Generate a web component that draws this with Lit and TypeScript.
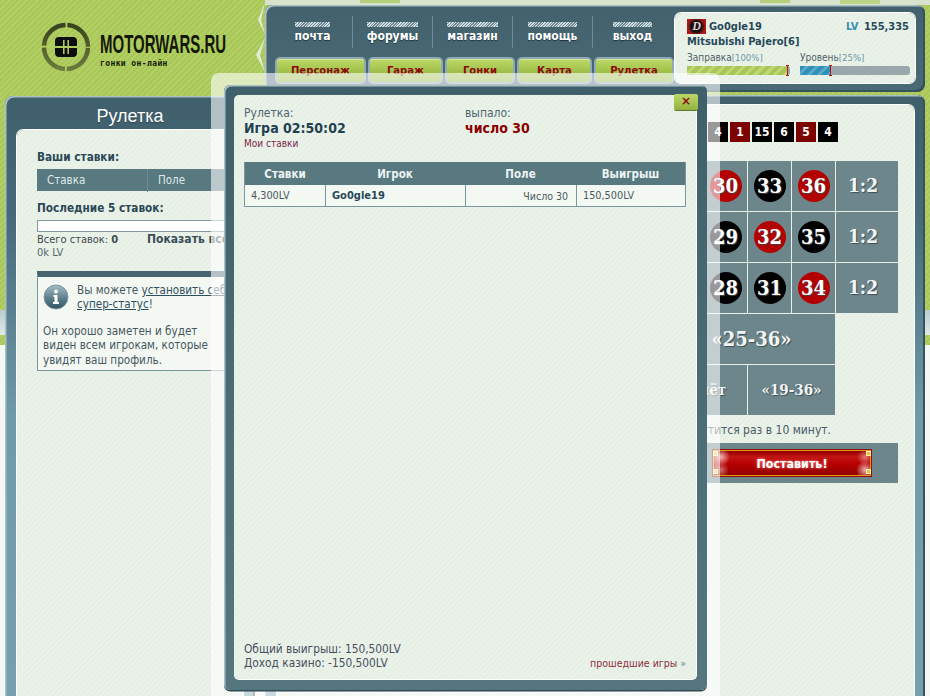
import { LitElement, html, css, svg } from "lit";
import { customElement } from "lit/decorators.js";

const RED = new Set([30, 32, 34, 36]);
const NAV = ["почта", "форумы", "магазин", "помощь", "выход"];
const TABS = ["Персонаж", "Гараж", "Гонки", "Карта", "Рулетка"];
const LAST = [
  [4, "b"], [1, "r"], [15, "b"], [6, "b"], [5, "r"], [4, "b"],
] as const;
/* Only the three columns the dialog leaves visible carry numbers. */
const ROWS = [3, 2, 1].map((base) => Array.from({ length: 12 }, (_, i) => (i >= 9 ? base + i * 3 : 0)));

@customElement("app-root")
export class AppRoot extends LitElement {
  static styles = css`
    :host {
      display: block;
      position: relative;
      width: 930px;
      height: 696px;
      overflow: hidden;
      font-family: "DejaVu Sans", sans-serif;
      font-stretch: condensed;
      font-size: 12px;
      color: #45575f;
      background:
        linear-gradient(#0000 0 310px, #b9cdd2 310px, #dfe8e6 335px, #0000 335px),
        linear-gradient(#0000 0 345px, #f3f8f2 345px),
        repeating-linear-gradient(135deg, #a8c758 0 2px, #b1cf63 2px 4px);
    }
    .deco { position: absolute; left: 250px; top: 0; }
    .page {
      position: relative;
      display: grid;
      grid-template-columns: 250px 660px;
      grid-template-rows: 87px 620px;
      column-gap: 10px;
      row-gap: 3px;
      padding: 5px 0 0 5px;
    }
    .logo { display: flex; align-items: center; gap: 9px; padding: 0 0 4px 36px; }
    .logo-text { display: flex; flex-direction: column; color: #14180a; margin-top: 5px; }
    .brand {
      font: 700 25px/29px "Liberation Sans", sans-serif;
      transform: scaleX(0.6);
      transform-origin: left;
      white-space: nowrap;
      width: 126px;
    }
    .slogan { font: 700 8px/10px "DejaVu Sans Mono", monospace; letter-spacing: 0.4px; }

    .frame {
      background: linear-gradient(#3f5f6b 0, #47697a 120px, #6f9aa8 320px, #76a0ad 100%);
      box-shadow: inset 1.5px 1.5px 0 #a9bfc6, inset -2px 0 0 #365361;
      border-radius: 8px 8px 0 0;
    }
    .head {
      display: flex;
      background: linear-gradient(#42616d, #4a6a76);
      box-shadow: inset 1.5px 1.5px 0 #a9bfc6, inset -2px -2px 0 #35525e;
      border-radius: 8px;
      padding: 8px 10px 9px 0;
    }
    .nav { flex: 1; padding-left: 8px; }
    .nav-items { display: flex; margin-top: 3px; height: 32px; }
    .nav-item {
      width: 79px;
      display: flex;
      justify-content: center;
      align-items: center;
      border-right: 1px solid #6f8d98;
    }
    .nav-item:last-child { border-right: 0; }
    .nav-label {
      display: flex;
      flex-direction: column;
      gap: 2px;
      color: #fff;
      font-weight: 700;
      font-size: 12px;
      line-height: 14px;
      text-shadow: 0 1px 1px #1f3540;
    }
    .hatch {
      height: 5px;
      background: repeating-linear-gradient(135deg, #cfdbdf 0 1px, #6f8b96 1px 2px);
    }
    .tabs {
      display: grid;
      grid-template-columns: 87px 71px 66px 71px 76px;
      gap: 6px;
      margin: 11px 0 0 4px;
    }
    .tab {
      height: 23px;
      border-radius: 3px;
      background: linear-gradient(#bcd968, #a1c04a 55%, #92b23e);
      box-shadow: 0 0 0 2px #8faab6, inset 0 1px 0 #d7ea97;
      color: #8b0c0c;
      font-weight: 700;
      font-size: 11.2px;
      display: flex;
      align-items: center;
      justify-content: center;
      box-sizing: border-box;
    }
    .user {
      width: 240px;
      box-sizing: border-box;
      padding: 5px 6px 0 12px;
      border-radius: 6px;
      box-shadow: 0 0 0 1px #fff;
      background: repeating-linear-gradient(135deg, #e6efe5 0 2px, #ebf3e9 2px 4px);
    }
    .u-top { display: flex; align-items: center; height: 16px; color: #27495a; font-weight: 700; font-size: 11px; }
    .avatar {
      width: 19px; height: 15px; margin-right: 3px;
      background: radial-gradient(circle, #111 45%, #b01818 72%);
      display: flex; align-items: center; justify-content: center;
      color: #e9c9c9; font: italic 700 12px/15px "Liberation Serif", serif;
    }
    .lv { margin-left: auto; }
    .lv b { color: #3a8fb3; margin-right: 2px; }
    .car { color: #27495a; font-weight: 700; font-size: 11px; line-height: 16px; }
    .bars { display: grid; grid-template-columns: 103px 110px; gap: 10px; margin-top: 1px; }
    .bar-label { font-size: 10px; line-height: 13px; color: #4d6169; white-space: nowrap; }
    .bar-label span { color: #6d97a8; font-size: 9.5px; }
    .bar { position: relative; height: 9px; margin-top: 2px; background: #9aa8ad; border-radius: 0 3px 3px 0; }
    .fill { position: relative; height: 100%; }
    .fill.green { background: repeating-linear-gradient(135deg, #a7c653 0 4px, #bdd676 4px 7px); }
    .fill.blue { background: repeating-linear-gradient(135deg, #2f90b8 0 4px, #5aa9c6 4px 7px); }
    .fill::after {
      content: "";
      position: absolute;
      right: 0;
      top: -1px;
      bottom: -1px;
      width: 1px;
      background: #b01818;
    }
    .fill::before {
      content: "";
      position: absolute;
      right: -1px;
      top: -1px;
      bottom: -1px;
      width: 3px;
      border-top: 1px solid #b01818;
      border-bottom: 1px solid #b01818;
      box-sizing: border-box;
    }

    .main-l { margin-top: 1px; padding: 0 12px; display: flex; flex-direction: column; }
    .main-l-title {
      height: 34px;
      box-sizing: border-box;
      padding-top: 5px;
      display: flex;
      align-items: center;
      justify-content: center;
      color: #fff;
      font: 400 18px/1 "Liberation Sans", sans-serif;
      text-shadow: 0 1px 1px #2b4450;
      flex: none;
    }
    .inner {
      border-radius: 6px 6px 0 0;
      box-shadow: 0 0 0 1px #fff;
      background: repeating-linear-gradient(135deg, #e6efe5 0 2px, #ebf3e9 2px 4px);
    }
    .left-inner { flex: 1; padding: 20px 8px 0 20px; }
    h4 { margin: 0; font-size: 11.7px; line-height: 15px; color: #2a4856; font-weight: 700; }
    .thead {
      display: grid;
      grid-template-columns: 110px 1fr;
      height: 22px;
      margin-top: 4px;
      background: #58797f;
      color: #dfe9ea;
      font-size: 11.5px;
      line-height: 23px;
    }
    .thead span { padding-left: 10px; }
    .thead span + span { border-left: 1px solid #6d8c92; }
    .last { margin-top: 10px; }
    .empty { height: 10px; margin-top: 4px; background: #fff; border: 1px solid #82989f; }
    .totals { display: grid; grid-template-columns: 110px 1fr; margin-top: 0; line-height: 13px; font-size: 11px; padding-top: 1px; }
    .totals strong { font-size: 12px; color: #3c4d59; white-space: nowrap; }
    .totals .k { color: #3c4a50; }
    .sub { font-size: 11px; color: #55656b; line-height: 13px; }
    .info {
      margin-top: 12px;
      background: #f4f8f3;
      border: 1px solid #7c969e;
      border-top: 6px solid #466570;
      padding: 6px 5px 3px 5px;
      line-height: 14.3px;
      font-size: 11.6px;
      color: #45575f;
    }
    .info-top { display: flex; gap: 8px; align-items: flex-start; margin-bottom: 12px; min-height: 29px; }
    .info-top svg { flex: none; margin-top: 1px; }
    .info a { color: #2f5060; text-decoration: underline; }
    .nw { white-space: nowrap; }

    .main-r { padding: 10px 11px 0 12px; }
    .right-inner { height: 100%; padding: 17px 16px 0 0; box-sizing: border-box; }
    .hist { display: flex; justify-content: flex-end; gap: 2px; margin-right: 60px; }
    .sq {
      width: 20px; height: 20px;
      display: flex; align-items: center; justify-content: center;
      color: #fff;
      font-weight: 700;
      font-size: 12px;
      background: #000;
    }
    .sq.r { background: #7d0202; }
    .table {
      display: grid;
      grid-template-columns: repeat(12, 43px) 62px;
      grid-auto-rows: 50px;
      gap: 1px;
      justify-content: end;
      margin-top: 19px;
    }
    .cell {
      background: #6d868c;
      display: flex;
      align-items: center;
      justify-content: center;
      color: #f2f5f5;
      font: 700 20px/1 "DejaVu Serif", serif;
      font-stretch: condensed;
      text-shadow: 1px 1px 1px #3d4f55;
      white-space: nowrap;
      overflow: hidden;
    }
    .cell.small { font-size: 15px; }
    .cell.ratio { font-size: 19px; padding: 0 8px 2px 0; }
    .span4 { grid-column: span 4; padding-left: 8px; }
    .span2 { grid-column: span 2; }
    .num {
      width: 32px; height: 32px;
      border-radius: 50%;
      background: #000;
      display: flex; align-items: center; justify-content: center;
      color: #fff;
      text-shadow: 1px 1px 1px #444;
    }
    .num.r { background: #b30000; }
    .note { margin: 8px 67px 0 0; text-align: right; line-height: 14px; white-space: nowrap; color: #4a5a66; }
    .bet {
      margin-top: 6px;
      height: 40px;
      margin-left: -20px;
      background: #6d868c;
      display: flex;
      align-items: center;
      justify-content: flex-end;
      padding-right: 27px;
    }
    .btn {
      position: relative;
      width: 158px; height: 26px;
      box-sizing: border-box;
      border: 1px solid #e79a12;
      outline: 1px solid #8a0f0f;
      background:
        radial-gradient(circle at 7px 6px, #ffd9d9cc 0, #0000 9px),
        radial-gradient(circle at 151px 19px, #ffd9d9cc 0, #0000 9px),
        radial-gradient(circle at 151px 6px, #ffd9d980 0, #0000 8px),
        radial-gradient(circle at 7px 19px, #ffd9d980 0, #0000 8px),
        linear-gradient(#8f0000, #c41414 25%, #b50000 55%, #920000);
      color: #fff;
      display: flex; align-items: center; justify-content: center;
      font-weight: 700;
      font-size: 12.4px;
      text-shadow: 0 0 3px #ffb0b0;
    }
    .btn i {
      position: absolute;
      width: 5px; height: 5px;
      background: #e8c34a;
      border: 1px solid #fff0a8;
      box-sizing: border-box;
    }
    .btn i:nth-child(1) { left: -1px; top: 0; }
    .btn i:nth-child(2) { right: -1px; top: 0; }
    .btn i:nth-child(3) { left: -1px; bottom: 1px; }
    .btn i:nth-child(4) { right: -1px; bottom: 1px; }

    .overlay {
      position: absolute;
      left: 211px;
      top: 73px;
      width: 509px;
      height: 623px;
      box-sizing: border-box;
      padding: 12px 13px 6px 13px;
      background: rgba(255, 255, 255, 0.6);
      border-radius: 8px 8px 0 0;
      display: flex;
    }
    .modal {
      position: relative;
      flex: 1;
      display: flex;
      padding: 10px;
      background: linear-gradient(#3f5f6b, #56767f);
      border-radius: 6px;
      box-shadow: inset 1.5px 1.5px 0 #a9bfc6, 0 1.5px 0 #2f4a55;
    }
    .m-inner {
      flex: 1;
      display: flex;
      flex-direction: column;
      border-radius: 5px;
      border-right: 1px solid #fff;
      border-bottom: 1px solid #fff;
      padding: 11px 10px 9px 10px;
      background: repeating-linear-gradient(135deg, #e6efe5 0 2px, #ebf3e9 2px 4px);
    }
    .close {
      position: absolute;
      right: 9px;
      top: 9px;
      width: 24px; height: 16px;
      border-radius: 2px;
      background: linear-gradient(#bcd968, #92b23e);
      box-shadow: 0 1px 0 #61772a;
      color: #8b0c0c;
      font: 700 12px/15px "DejaVu Sans", sans-serif;
      text-align: center;
    }
    .m-head { display: grid; grid-template-columns: 221px 1fr; }
    .m-l { line-height: 14px; color: #4e6570; }
    .m-big { font-size: 14px; font-weight: 700; line-height: 16px; color: #1f4152; white-space: nowrap; }
    .m-big.red { color: #8b0000; }
    .mine { font-size: 10px; line-height: 13px; margin-top: 1px; color: #7d1f4e; }
    .m-table {
      display: grid;
      grid-template-columns: 80px 140px 111px 1fr;
      margin-top: 12px;
      border: 1px solid #7a969e;
      border-top: 0;
    }
    .m-th {
      background: #58797f;
      height: 23px;
      color: #eef4f4;
      font-weight: 700;
      font-size: 11.5px;
      display: flex; align-items: center; justify-content: center;
    }
    .m-td {
      height: 21px;
      background: #f4f8f2;
      display: flex; align-items: center;
      padding: 0 6px;
      border-left: 1px solid #7a969e;
      color: #48585f;
      font-size: 10.8px;
    }
    .m-td:nth-child(5) { border-left: 0; }
    .m-td.b { font-weight: 700; color: #27495a; font-size: 11px; }
    .m-td.rt { justify-content: flex-end; font-size: 10.5px; padding-right: 8px; }
    .m-foot { margin-top: auto; display: flex; justify-content: space-between; align-items: flex-end; line-height: 14px; font-size: 11.8px; color: #464f5e; }
    .past { font-size: 10.5px; color: #8b2f3f; }
    .past span { color: #6d868c; }
  `;

  private logoIcon() {
    return html`<svg width="50" height="50" viewBox="0 0 50 50">
      <defs>
        <linearGradient id="rg" x1="0" y1="0" x2="0" y2="1">
          <stop offset="0" stop-color="#39431f" />
          <stop offset="1" stop-color="#6b7b3c" />
        </linearGradient>
      </defs>
      ${svg`<circle cx="25" cy="25" r="22" fill="none" stroke="url(#rg)" stroke-width="4.4"
        stroke-dasharray="32.5 2" stroke-dashoffset="-1"/>
      <path d="M18 15h14a4 4 0 0 1 4 4v5H14v-5a4 4 0 0 1 4-4zM14 26h22v5a4 4 0 0 1-4 4H18a4 4 0 0 1-4-4z" fill="#0d0d0d"/>
      <path d="M22 18h1.6v6H22zM26.4 18H28v6h-1.6zM22 26h1.6v6H22zM26.4 26H28v6h-1.6z" fill="#a9c85a"/>`}
    </svg>`;
  }

  private infoIcon() {
    return html`<svg width="26" height="26" viewBox="0 0 26 26">
      <defs>
        <linearGradient id="ig" x1="0" y1="0" x2="0" y2="1">
          <stop offset="0" stop-color="#a6bcc4" />
          <stop offset="0.55" stop-color="#5d7f8c" />
          <stop offset="1" stop-color="#2f5261" />
        </linearGradient>
      </defs>
      ${svg`<circle cx="13" cy="13" r="12" fill="url(#ig)" stroke="#7e97a0"/>
      <circle cx="13" cy="7.5" r="2" fill="#fff"/>
      <path d="M10.5 11h4v7h1.5v2h-6v-2h1.5v-5h-1z" fill="#fff"/>`}
    </svg>`;
  }

  private deco() {
    return html`<svg class="deco" width="680" height="90" viewBox="0 0 680 90">
      ${svg`<rect x="15" width="665" height="5" fill="#d7e3cd"/>
      <rect x="110" width="40" height="3" fill="#b6cf7d"/>
      <rect x="510" width="30" height="3" fill="#b6cf7d"/>
      <rect x="590" width="40" height="4" fill="#bcd585"/>
      <path d="M15 2 L8 20 L15 34 L11 20 Z M15 38 L6 55 L15 72 L10 55 Z" fill="#e3ebd8"/>`}
    </svg>`;
  }

  private renderTable() {
    return html`<div class="table">
      ${ROWS.map(
        (row) => html`${row.map(
          (n) => html`<div class="cell">${n ? html`<div class="num ${RED.has(n) ? "r" : ""}">${n}</div>` : ""}</div>`
        )}<div class="cell ratio">1:2</div>`
      )}
      <div class="cell span4"></div>
      <div class="cell span4"></div>
      <div class="cell span4">«25-36»</div>
      <div></div>
      <div class="cell span2 small"></div>
      <div class="cell span2 small"></div>
      <div class="cell span2 small"></div>
      <div class="cell span2 small"></div>
      <div class="cell span2 small">нечёт</div>
      <div class="cell span2 small">«19-36»</div>
    </div>`;
  }

  render() {
    return html`
      ${this.deco()}
      <div class="page">
        <div class="logo">
          ${this.logoIcon()}
          <div class="logo-text">
            <div class="brand">MOTORWARS.RU</div>
            <div class="slogan">гонки он-лайн</div>
          </div>
        </div>
        <div class="head">
          <div class="nav">
            <div class="nav-items">
              ${NAV.map(
                (n) => html`<div class="nav-item"><div class="nav-label"><div class="hatch"></div>${n}</div></div>`
              )}
            </div>
            <div class="tabs">${TABS.map((t) => html`<div class="tab">${t}</div>`)}</div>
          </div>
          <div class="user">
            <div class="u-top">
              <div class="avatar">D</div>Go0gle19
              <div class="lv"><b>LV</b> 155,335</div>
            </div>
            <div class="car">Mitsubishi Pajero[6]</div>
            <div class="bars">
              <div>
                <div class="bar-label">Заправка<span>[100%]</span></div>
                <div class="bar"><div class="fill green" style="width:98%"></div></div>
              </div>
              <div>
                <div class="bar-label">Уровень<span>[25%]</span></div>
                <div class="bar"><div class="fill blue" style="width:28%"></div></div>
              </div>
            </div>
          </div>
        </div>
        <div class="frame main-l">
          <div class="main-l-title">Рулетка</div>
          <div class="inner left-inner">
            <h4>Ваши ставки:</h4>
            <div class="thead"><span>Ставка</span><span>Поле</span></div>
            <h4 class="last">Последние 5 ставок:</h4>
            <div class="empty"></div>
            <div class="totals">
              <div class="k">Всего ставок: <b>0</b></div>
              <strong>Показать все</strong>
            </div>
            <div class="sub">0k LV</div>
            <div class="info">
              <div class="info-top">
                ${this.infoIcon()}
                <div>
                  <div class="nw">Вы можете <a href="#">установить себе</a></div>
                  <div><a href="#">супер-статус</a>!</div>
                </div>
              </div>
              Он хорошо заметен и будет<br />
              виден всем игрокам, которые<br />
              увидят ваш профиль.
            </div>
          </div>
        </div>
        <div class="frame main-r">
          <div class="inner right-inner">
            <div class="hist">
              ${LAST.map(([n, c]) => html`<div class="sq ${c}">${n}</div>`)}
            </div>
            ${this.renderTable()}
            <div class="note">Рулетка крутится раз в 10 минут.</div>
            <div class="bet">
              <div class="btn"><i></i><i></i><i></i><i></i>Поставить!</div>
            </div>
          </div>
        </div>
      </div>
      <div class="overlay">
        <div class="modal">
          <div class="close">×</div>
          <div class="m-inner">
            <div class="m-head">
              <div>
                <div class="m-l">Рулетка:</div>
                <div class="m-big">Игра 02:50:02</div>
                <div class="mine">Мои ставки</div>
              </div>
              <div>
                <div class="m-l">выпало:</div>
                <div class="m-big red">число 30</div>
              </div>
            </div>
            <div class="m-table">
              <div class="m-th">Ставки</div>
              <div class="m-th">Игрок</div>
              <div class="m-th">Поле</div>
              <div class="m-th">Выигрыш</div>
              <div class="m-td">4,300LV</div>
              <div class="m-td b">Go0gle19</div>
              <div class="m-td rt">Число 30</div>
              <div class="m-td">150,500LV</div>
            </div>
            <div class="m-foot">
              <div>Общий выигрыш: 150,500LV<br />Доход казино: -150,500LV</div>
              <div class="past">прошедшие игры <span>»</span></div>
            </div>
          </div>
        </div>
      </div>
    `;
  }
}
